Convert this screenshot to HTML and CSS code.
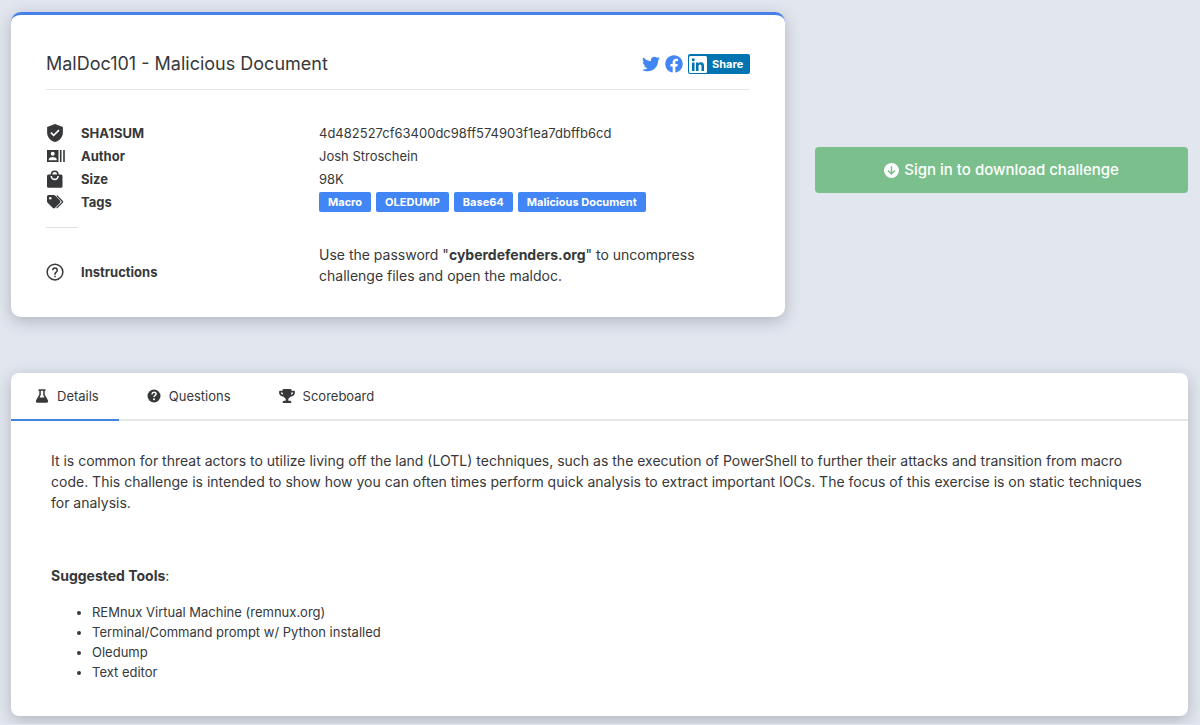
FILE: index.html
```html
<!DOCTYPE html>
<html lang="en">
<head>
<meta charset="utf-8">
<meta name="viewport" content="width=device-width, initial-scale=1">
<title>MalDoc101 - Malicious Document</title>
<link rel="stylesheet" href="styles.css">
</head>
<body>
<main class="page">
  <div class="top">
    <section class="card summary">
      <header class="summary-head">
        <h1 class="title">MalDoc101 - Malicious Document</h1>
        <div class="social">
          <a class="social-link" href="#" aria-label="Twitter"><svg width="18" height="18" viewBox="0 0 512 512"><path fill="currentColor" d="M459.4 151.7c.3 4.500.3 9.100.3 13.600 0 138.700-105.600 298.600-298.600 298.600-59.500 0-114.700-17.200-161.100-47.100 8.400 1 16.600 1.300 25.300 1.300 49.100 0 94.200-16.600 130.300-44.800-46.100-1-84.800-31.200-98.100-72.800 6.500 1 13 1.600 19.800 1.600 9.400 0 18.800-1.300 27.600-3.600-48.100-9.700-84.100-52-84.100-103v-1.300c14 7.800 30.200 12.700 47.400 13.300-28.300-18.800-46.800-51-46.800-87.400 0-19.500 5.200-37.400 14.300-53 51.700 63.700 129.300 105.300 216.400 109.800-1.600-7.800-2.600-15.900-2.600-24 0-57.800 46.800-104.900 104.900-104.900 30.200 0 57.500 12.700 76.700 33.100 23.700-4.500 46.500-13.300 66.600-25.300-7.800 24.400-24.400 44.800-46.100 57.800 21.100-2.300 41.600-8.100 60.400-16.200-14.300 20.800-32.200 39.300-52.600 54.300z"/></svg></a>
          <a class="social-link" href="#" aria-label="Facebook"><svg width="18" height="18" viewBox="0 0 512 512"><path fill="currentColor" d="M504 256C504 119 393 8 256 8S8 119 8 256c0 123.800 90.700 226.400 209.300 245V327.700h-63V256h63v-54.600c0-62.200 37-96.500 93.700-96.500 27.100 0 55.500 4.800 55.500 4.800v61h-31.300c-30.800 0-40.400 19.100-40.400 38.700V256h68.800l-11 71.700h-57.800V501C413.300 482.400 504 379.800 504 256z"/></svg></a>
          <a class="share" href="#"><svg width="18" height="18" viewBox="0 0 18 18"><rect y="1" width="18" height="17" rx="1.500" fill="#fff"/><path fill="#0073b1" d="M3 7.500h2.500V16H3zM7 7.500h2.400v1.200c.5-.9 1.500-1.400 2.600-1.400 2.400 0 3 1.600 3 3.700v5h-2.500v-4.500c0-1-.1-2.100-1.400-2.100s-1.600 1-1.600 2.100V16H7z"/><circle cx="4.250" cy="4.800" r="1.500" fill="#0073b1"/></svg>Share</a>
        </div>
      </header>

      <dl class="facts">
        <div class="fact">
          <dt class="term"><svg width="18" height="18" viewBox="0 0 24 24"><path fill="currentColor" d="M12 0 1.500 4v7.500c0 5.800 4.400 10.800 10.500 12.500 6.100-1.700 10.500-6.700 10.500-12.500V4L12 0zm-1.800 16.800-4.400-4.400 1.600-1.600 2.800 2.800 6.300-6.300 1.600 1.600-7.900 7.900z"/></svg>SHA1SUM</dt>
          <dd class="value">4d482527cf63400dc98ff574903f1ea7dbffb6cd</dd>
        </div>
        <div class="fact">
          <dt class="term"><svg width="19" height="18" viewBox="0 0 19 18"><path fill="currentColor" fill-rule="evenodd" d="M1 3h11.500v12H1zM6.700 4.800a2 2 0 1 0 0 4 2 2 0 0 0 0-4zM2.700 13.200h8v-1c0-1.500-2.600-2.300-4-2.300s-4 .8-4 2.300zM13.900 3h1.600v12h-1.600zM17.200 3h1.600v12h-1.600z"/></svg>Author</dt>
          <dd class="value">Josh Stroschein</dd>
        </div>
        <div class="fact">
          <dt class="term"><svg width="18" height="18" viewBox="0 0 18 18"><path fill="currentColor" fill-rule="evenodd" d="M4.700 4.500a4 4 0 0 1 8 0H15A1.500 1.500 0 0 1 16.500 6v10.200A1.500 1.500 0 0 1 15 17.700H2.500A1.500 1.500 0 0 1 1 16.200V6a1.500 1.500 0 0 1 1.500-1.500zm1.600 0h4.800a2.400 2.400 0 0 0-4.800 0zM4.500 6a4.200 4.200 0 0 0 8.400 0h-1.600a2.600 2.600 0 0 1-5.200 0z"/></svg>Size</dt>
          <dd class="value">98K</dd>
        </div>
        <div class="fact">
          <dt class="term"><svg width="18" height="18" viewBox="0 0 18 18"><path fill="currentColor" fill-rule="evenodd" d="M1 3.500A1.500 1.500 0 0 1 2.500 2h5.200a2 2 0 0 1 1.400.6l4.800 4.900a1.800 1.800 0 0 1 0 2.500l-4.700 4.800a1.800 1.800 0 0 1-2.600 0L1.600 9.700A2 2 0 0 1 1 8.300zM4.300 3.900a1.300 1.300 0 1 0 0 2.600 1.300 1.300 0 0 0 0-2.600z"/><path fill="none" stroke="currentColor" stroke-width="1.300" d="m10.700 2.600 5.600 5.600q.6.600 0 1.200l-5.600 5.700"/></svg>Tags</dt>
          <dd class="value tags"><span class="tag">Macro</span><span class="tag">OLEDUMP</span><span class="tag">Base64</span><span class="tag">Malicious Document</span></dd>
        </div>
        <div class="fact instructions">
          <dt class="term"><svg width="18" height="18" viewBox="0 0 24 24"><path fill="currentColor" d="M11 19h2v-2h-2v2zm1-18.500a11.500 11.500 0 1 0 0 23 11.500 11.500 0 0 0 0-23zm0 21a9.500 9.500 0 1 1 0-19 9.500 9.500 0 0 1 0 19zM12 5.500a4 4 0 0 0-4 4h2a2 2 0 1 1 4 0c0 2-3 1.800-3 6h2c0-2.600 3-3 3-6a4 4 0 0 0-4-4z"/></svg>Instructions</dt>
          <dd class="value">Use the password "<strong>cyberdefenders.org</strong>" to uncompress challenge files and open the maldoc.</dd>
        </div>
      </dl>
    </section>

    <button class="download" type="button"><svg width="15" height="15" viewBox="0 0 16 16"><circle cx="8" cy="8" r="8" fill="currentColor"/><path d="M8 3.500v8M4.300 8 8 11.700 11.700 8" fill="none" stroke="#7abf8c" stroke-width="1.600"/></svg>Sign in to download challenge</button>
  </div>

  <section class="card details">
    <nav class="tabs">
      <a class="tab active" href="#details"><svg width="14" height="14" viewBox="0 0 14 14"><path fill="currentColor" fill-rule="evenodd" d="M3.500.3h7v1.500h-.8v3.800l3.200 5.600c.7 1.200 0 2.500-1.300 2.500H2.400c-1.300 0-2-1.300-1.300-2.500l3.200-5.600V1.800h-.8zM5.800 1.800V6L4.500 8.400h5L8.200 6V1.800z"/></svg>Details</a>
      <a class="tab" href="#questions"><svg width="14" height="14" viewBox="0 0 14 14"><circle cx="7" cy="7" r="6.500" fill="currentColor"/><path d="M4.900 5.300C5.100 3.900 6 3.300 7 3.300c1.200 0 2.100.8 2.100 1.800C9.100 6.500 7 6.500 7 8.100" fill="none" stroke="#fff" stroke-width="1.500"/><circle cx="7" cy="10.300" r="1" fill="#fff"/></svg>Questions</a>
      <a class="tab" href="#scoreboard"><svg width="16" height="14" viewBox="0 0 576 512"><path fill="currentColor" d="M552 64H448V24c0-13.300-10.700-24-24-24H152c-13.300 0-24 10.700-24 24v40H24C10.700 64 0 74.700 0 88v56c0 35.700 22.500 72.400 61.900 100.700 31.500 22.700 69.800 37.100 110 41.700C203.300 338.500 240 360 240 360v72h-48c-35.300 0-64 20.700-64 56v12c0 6.600 5.400 12 12 12h296c6.600 0 12-5.400 12-12v-12c0-35.300-28.700-56-64-56h-48v-72s36.700-21.500 68.100-73.600c40.300-4.600 78.600-19 110-41.700 39.300-28.300 61.900-65 61.900-100.700V88c0-13.300-10.700-24-24-24zM99.300 192.800C74.900 175.200 64 155.600 64 144v-16h64.200c1 32.600 5.800 61.200 12.800 86.200-15.100-5.200-29.200-12.400-41.700-21.400zM512 144c0 16.100-17.700 36.100-35.300 48.800-12.500 9-26.700 16.200-41.800 21.400 7-25 11.800-53.600 12.800-86.200H512v16z"/></svg>Scoreboard</a>
    </nav>
    <div class="details-body">
      <p class="text">It is common for threat actors to utilize living off the land (LOTL) techniques, such as the execution of PowerShell to further their attacks and transition from macro code. This challenge is intended to show how you can often times perform quick analysis to extract important IOCs. The focus of this exercise is on static techniques for analysis.</p>
      <p class="text tools-title"><strong>Suggested Tools</strong>:</p>
      <ul class="tools">
        <li>REMnux Virtual Machine (remnux.org)</li>
        <li>Terminal/Command prompt w/ Python installed</li>
        <li>Oledump</li>
        <li>Text editor</li>
      </ul>
    </div>
  </section>
</main>
</body>
</html>
```
FILE: styles.css
```css
* {
  box-sizing: border-box;
}

body {
  margin: 0;
  background: #e2e6ef;
  color: #373839;
  font: 13px/20px Inter, "Liberation Sans", sans-serif;
}

svg {
  display: block;
  flex: none;
}

a {
  color: inherit;
  text-decoration: none;
}

.page {
  padding: 12px 12px 8px 11px;
}

.top {
  display: grid;
  grid-template-columns: minmax(0, 27fr) minmax(0, 13fr);
  gap: 30px;
  align-items: center;
  margin-bottom: 56px;
}

.card {
  background: #fff;
  border-radius: 8px;
  box-shadow: 0 4px 16px rgba(60, 65, 75, 0.3);
}

.summary {
  border-top: 3px solid #4680e8;
  border-radius: 10px;
  padding: 35px 35px 31px;
}

.summary-head {
  display: flex;
  align-items: center;
  justify-content: space-between;
  padding-bottom: 12px;
  border-bottom: 1px solid #e6e6e7;
}

.title {
  margin: 0;
  font-size: 18px;
  line-height: 27px;
  font-weight: 400;
}

.social {
  display: flex;
  align-items: center;
  gap: 5px;
  color: #4285f4;
}

.share {
  display: flex;
  align-items: center;
  gap: 5px;
  height: 20px;
  padding: 1px 7px 1px 1px;
  border-radius: 2px;
  background: #0073b1;
  color: #fff;
  font-size: 11px;
  font-weight: 700;
}

.facts {
  margin: 31px 0 0;
}

.fact {
  display: grid;
  grid-template-columns: 273px minmax(0, 1fr);
  align-items: center;
  min-height: 23px;
}

.term {
  display: grid;
  grid-template-columns: 35px 1fr;
  align-items: center;
  font-weight: 700;
}

.value {
  margin: 0;
}

.tags {
  display: flex;
  gap: 5px;
}

.tag {
  padding: 0 9px;
  border-radius: 2px;
  background: #4285f4;
  color: #fff;
  font-size: 11px;
  font-weight: 700;
}

.instructions {
  margin-top: 31px;
  font-size: 14px;
  line-height: 21px;
}

.instructions .term {
  position: relative;
  padding-top: 14px;
  font-size: 13px;
}

.instructions .term::before {
  content: "";
  position: absolute;
  top: -21px;
  left: 0;
  width: 32px;
  border-top: 1px solid #e0e0e1;
}

.download {
  display: flex;
  align-items: center;
  justify-content: center;
  gap: 5px;
  height: 46px;
  margin-top: 11px;
  border: 0;
  border-radius: 4px;
  background: #7abf8c;
  color: #fff;
  font: 500 15px/24px Inter, "Liberation Sans", sans-serif;
}

.tabs {
  display: flex;
  gap: 4px;
  border-bottom: 2px solid #e8e8e9;
}

.tab {
  display: flex;
  align-items: center;
  gap: 8px;
  margin-bottom: -2px;
  padding: 13px 20px;
  padding-left: 24px;
  border-bottom: 2px solid transparent;
}

.tab.active {
  border-color: #4285e0;
}

.details-body {
  padding: 29px 40px 34px;
}

.text {
  margin: 0;
  font-size: 14px;
  line-height: 21px;
}

.tools-title {
  margin-top: 52px;
}

.tools {
  margin: 16px 0 0;
  padding-left: 41px;
}
```
